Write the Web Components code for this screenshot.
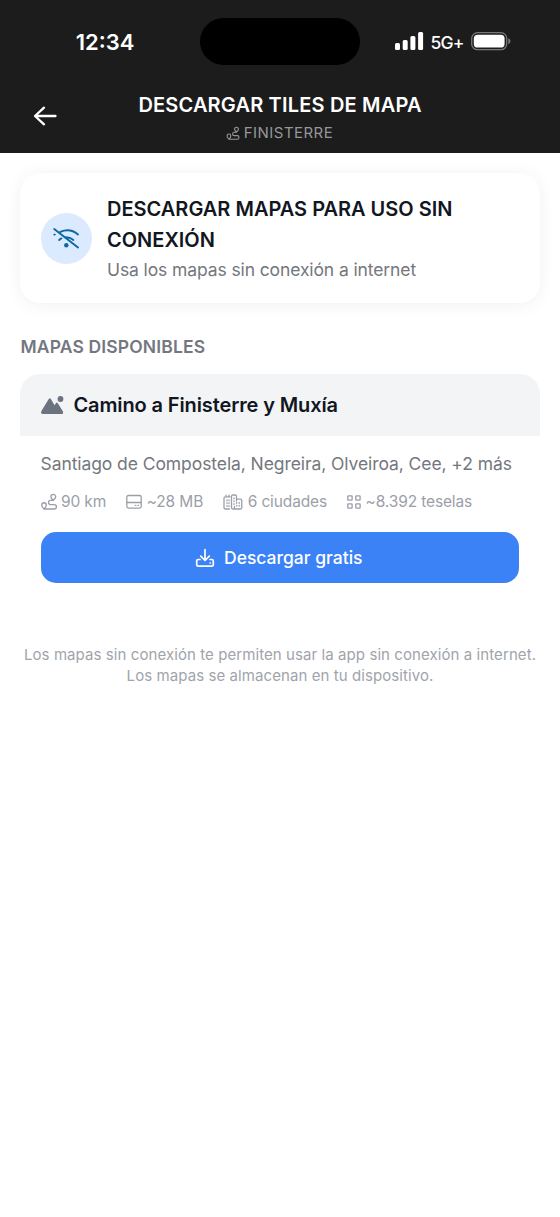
<!DOCTYPE html>
<html lang="es">
<head>
<meta charset="utf-8">
<title>Descargar tiles de mapa</title>
<style>
body{margin:0;background:#fff;font-family:Inter,"Liberation Sans",sans-serif;color:#11161f;-webkit-font-smoothing:antialiased}
</style>
</head>
<body>
<offline-maps-page></offline-maps-page>
<script>
const define = (name, html) => customElements.define(name, class extends HTMLElement {
  constructor() {
    super();
    const t = document.createElement('template');
    t.innerHTML = html;
    this.attachShadow({mode: 'open'}).append(t.content.cloneNode(true));
  }
});

const ICONS = {
  back: ['0 0 24 20', '<path d="M11 1.700 2 10l9 8.300M2.200 10H22.500" stroke-width="2.300"/>'],
  route: ['0 0 16 16', '<path stroke-width="1.350" d="M3 15C1.500 13.700.7 12.400.7 11a2.300 2.300 0 0 1 4.600 0c0 1.400-.8 2.700-2.300 4ZM12.300 6.200C10.800 5 9.900 4 9.900 2.800a2.400 2.400 0 0 1 4.800 0c0 1.200-.9 2.200-2.400 3.400ZM12.300 6.400H9.600a2.100 2.100 0 0 0 0 4.200h3.600a2.200 2.200 0 0 1 0 4.400H3"/>'],
  disk: ['0 0 16 16', '<rect x=".8" y="1.500" width="14.400" height="12.600" rx="1.500"/><path d="M1 8.500h14"/><path d="M9.300 11.400h.5M12 11.400h.5"/>'],
  city: ['0 0 20 16', '<path d="M6.500 15H2.600Q1 15 1 13.500V4.200Q1 2.800 2.400 2.800H7M3 2.800V1.200M6 2.800V1.200M10.700 15H10Q8.500 15 8.500 13.500V2.600Q8.500 1 10 1H12Q13.500 1 13.500 2.500V5.200H17.200Q18.800 5.200 18.800 6.800V13.400Q18.800 15 17.200 15H12.500M13.500 5.200V7M11.500 15v-2.500"/><path stroke-dasharray=".8 2" d="M4 6v7M6 6v7M11 4v7M13.700 8.500v5M16.200 8.500v5"/>'],
  grid: ['0 0 14 14', '<g stroke-width="1.350"><rect x=".8" y=".8" width="4.300" height="4.300" rx=".6"/><rect x="8.800" y=".8" width="4.300" height="4.300" rx=".6"/><rect x=".8" y="8.800" width="4.300" height="4.300" rx=".6"/><rect x="8.800" y="8.800" width="4.300" height="4.300" rx=".6"/></g>'],
  download: ['0 0 18 18', '<path stroke-width="1.700" d="M9 .5v10.800M4.700 7.200 9 11.500l4.300-4.300M4 10.500H2.300Q.7 10.500.7 12v3.700Q.7 17.200 2.300 17.200h13.400q1.600 0 1.600-1.500V12q0-1.500-1.600-1.500H14"/><path d="M14 14h.5" stroke-width="1.500"/>'],
  wifi: ['0 0 26 20', '<path stroke-width="1.900" d="M1.200 1 25 19.500M7.300 3.800C13.500 1.300 20.200 2.400 25 6.500M11.700 9.300c3.300-.3 6.300.7 8.700 2.600M6.200 12c.7-.7 1.400-1.200 2.200-1.600M1.300 6.600h.5"/><circle cx="13.300" cy="17.200" r="2.200" fill="currentColor" stroke="none"/>'],
  mountain: ['0 0 23 18', '<g fill="currentColor" stroke="none"><path d="M.4 15.100 7.600 3.200q1.200-1.700 2.400 0l3.500 6 1.600-2.100q.9-1.100 1.700.2l5 7.900Q23 18 20.500 18H1.900Q-.7 18 .4 15.100Z"/><circle cx="19.500" cy="3" r="2.900"/></g>'],
  signal: ['0 0 29 18', '<g fill="currentColor" stroke="none"><rect y="11" width="5" height="7" rx="1.500"/><rect x="7.700" y="8" width="5" height="10" rx="1.500"/><rect x="15.400" y="4" width="5" height="14" rx="1.500"/><rect x="23.100" width="5" height="18" rx="1.500"/></g>'],
  battery: ['0 0 40 19', '<rect x=".7" y=".7" width="35" height="17" rx="5.800" stroke="#777"/><rect x="2.800" y="2.800" width="30.800" height="12.800" rx="3.900" fill="currentColor" stroke="none"/><path d="M37.300 6.300q2.400 1 2.200 3 0 2-2.200 3Z" fill="#777" stroke="none"/>']
};
customElements.define('ui-icon', class extends HTMLElement {
  constructor() { super(); this.attachShadow({mode: 'open'}); }
  connectedCallback() {
    const [box, art] = ICONS[this.getAttribute('name')];
    this.shadowRoot.innerHTML = `<style>:host{display:block;flex:none}svg{display:block;width:100%;height:100%;overflow:visible}</style>
      <svg viewBox="${box}" fill="none" stroke="currentColor" stroke-width="1.300" stroke-linecap="round" stroke-linejoin="round">${art}</svg>`;
  }
});

define('status-bar', `<style>
:host{display:grid;grid-template-columns:200px 160px 200px;height:47px;padding-top:18px;color:#fff;align-items:center}
.time{font-size:22px;font-weight:600;padding-left:10px;text-align:center}
.island{height:47px;background:#000;border-radius:24px}
.right{display:flex;align-items:center;padding-left:34.500px;margin-top:-1px}
.signal{width:29px;height:18px}.net{font-size:17.500px;font-weight:500;margin:2px 7.500px 0 7px;width:33px;white-space:nowrap;letter-spacing:-.8px}
.battery{width:40px;height:19px}
</style><span class="time">12:34</span><div class="island"></div>
<div class="right"><ui-icon class="signal" name="signal"></ui-icon><span class="net">5G+</span><ui-icon class="battery" name="battery"></ui-icon></div>`);

define('nav-header', `<style>
:host{display:grid;grid-template-columns:70px 1fr 70px;height:88px;color:#fff}
.back{width:24px;height:20px;margin:41px 0 0 33px}
.mid{text-align:center;padding-top:27px}
.title{font-size:20px;line-height:26px;font-weight:600;white-space:nowrap;letter-spacing:.18px}
.sub{display:flex;justify-content:center;align-items:center;gap:4px;font-size:15px;line-height:20px;margin:5px 1px 0 0;color:#96979b;letter-spacing:.45px}
.sub ui-icon{width:14px;height:13px}
</style><ui-icon class="back" name="back"></ui-icon><div class="mid"><div class="title"><slot name="title"></slot></div>
<div class="sub"><ui-icon name="route"></ui-icon><span><slot></slot></span></div></div>`);

define('info-card', `<style>
:host{display:flex;align-items:center;box-sizing:border-box;height:130px;padding:0 20.500px;border-radius:20px;background:#fff;box-shadow:0 2px 18px rgba(0,0,0,.06)}
.disc{width:51px;height:51px;border-radius:50%;background:#dbeafe;color:#0c67a7;display:grid;place-items:center;flex:none}
.disc ui-icon{width:26px;height:20px}
.text{margin-left:15.500px}
.title{font-size:20px;line-height:31px;font-weight:600;white-space:nowrap;padding-top:1px}
.sub{font-size:17.500px;line-height:26px;color:#74777d;margin-top:1px;white-space:nowrap;letter-spacing:-.11px}
</style><div class="disc"><ui-icon name="wifi"></ui-icon></div><div class="text"><div class="title"><slot name="title"></slot></div><div class="sub"><slot></slot></div></div>`);

define('stat-item', `<style>
:host{display:flex;align-items:center;gap:4.500px;font-size:15.500px;line-height:20px;color:#9ba0a8;white-space:nowrap;letter-spacing:-.13px}
</style><slot name="icon"></slot><span><slot></slot></span>`);

define('action-button', `<style>
button{display:flex;align-items:center;justify-content:center;gap:10px;width:100%;height:51px;border:0;border-radius:15px;padding:0 1px 0 0;background:#3b82f6;color:#fff;font:500 17.500px Inter,sans-serif;letter-spacing:0}
ui-icon{width:18px;height:18px}:host{display:block}
</style><button><ui-icon name="download"></ui-icon><span><slot></slot></span></button>`);

define('map-card', `<style>
:host{display:block}
header{display:flex;align-items:center;height:62px;padding:0 20.500px;background:#f2f4f6;border-radius:20px 20px 0 0}
header ui-icon{width:23px;height:18px;color:#6b7280;margin-right:10px}
.name{font-size:20px;font-weight:600;white-space:nowrap;letter-spacing:-.12px}
.body{padding:15px 21px 0 20.500px}
.cities{font-size:17.500px;line-height:26px;color:#74777d;white-space:nowrap;letter-spacing:-.08px}
.stats{display:flex;gap:20px;height:20px;margin:15px 0 20px}
</style><header><ui-icon name="mountain"></ui-icon><span class="name"><slot name="name"></slot></span></header>
<div class="body"><div class="cities"><slot name="cities"></slot></div><div class="stats"><slot name="stats"></slot></div><slot></slot></div>`);

define('offline-maps-page', `<style>
:host{display:block;width:560px;height:1217px;overflow:hidden;background:#fff}
.top{background:#1c1c1c;height:153px}
main{padding:20px 20px 0}
h2{margin:30px 0 14px .5px;font-size:17.500px;line-height:27px;font-weight:600;color:#74777f;letter-spacing:.15px}
footer{margin-top:62px;font-size:15px;line-height:20.500px;color:#a0a4ab;white-space:nowrap;letter-spacing:.08px;display:flex;flex-direction:column;align-items:center}
.i16{width:16px;height:16px}.city{width:20px;height:16px}.grid{width:14px;height:14px}
</style>
<div class="top"><status-bar></status-bar><nav-header><span slot="title">DESCARGAR TILES DE MAPA</span>FINISTERRE</nav-header></div>
<main>
<info-card><span slot="title">DESCARGAR MAPAS PARA USO SIN<br>CONEXIÓN</span>Usa los mapas sin conexión a internet</info-card>
<h2>MAPAS DISPONIBLES</h2>
<map-card><span slot="name">Camino a Finisterre y Muxía</span><span slot="cities">Santiago de Compostela, Negreira, Olveiroa, Cee, +2 más</span>
<stat-item slot="stats"><ui-icon class="i16" slot="icon" name="route"></ui-icon>90 km</stat-item>
<stat-item slot="stats"><ui-icon class="i16" slot="icon" name="disk"></ui-icon>~28 MB</stat-item>
<stat-item slot="stats"><ui-icon class="city" slot="icon" name="city"></ui-icon>6 ciudades</stat-item>
<stat-item slot="stats"><ui-icon class="grid" slot="icon" name="grid"></ui-icon>~8.392 teselas</stat-item>
<action-button>Descargar gratis</action-button></map-card>
<footer><span>Los mapas sin conexión te permiten usar la app sin conexión a internet.</span><span>Los mapas se almacenan en tu dispositivo.</span></footer>
</main>`);
</script>
</body>
</html>
